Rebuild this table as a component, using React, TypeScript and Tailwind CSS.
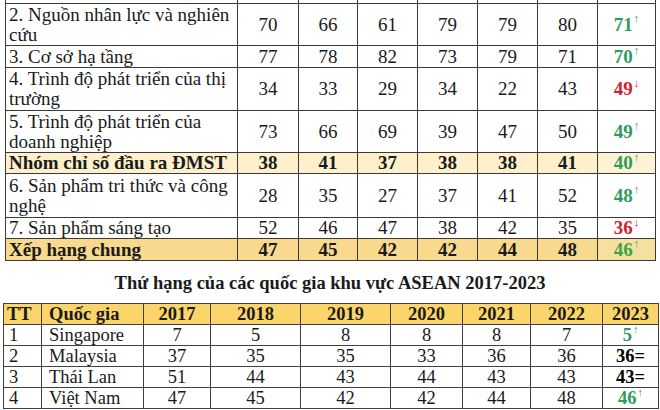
import React from "react";

type Row = {
  label: React.ReactNode;
  vals: number[];
  last: { v: string; dir: "up" | "down" | "eq" };
  h: string;
  kind?: "group" | "total";
};

const topRows: Row[] = [
  {
    label: (
      <>
        2. Nguồn nhân lực và nghiên
        <br />
        cứu
      </>
    ),
    vals: [70, 66, 61, 79, 79, 80],
    last: { v: "71", dir: "up" },
    h: "h-[42px]",
  },
  { label: "3. Cơ sở hạ tầng", vals: [77, 78, 82, 73, 79, 71], last: { v: "70", dir: "up" }, h: "h-[22px]" },
  {
    label: (
      <>
        4. Trình độ phát triển của thị
        <br />
        trường
      </>
    ),
    vals: [34, 33, 29, 34, 22, 43],
    last: { v: "49", dir: "down" },
    h: "h-[43px]",
  },
  {
    label: (
      <>
        5. Trình độ phát triển của
        <br />
        doanh nghiệp
      </>
    ),
    vals: [73, 66, 69, 39, 47, 50],
    last: { v: "49", dir: "up" },
    h: "h-[42px]",
  },
  {
    label: "Nhóm chỉ số đầu ra ĐMST",
    vals: [38, 41, 37, 38, 38, 41],
    last: { v: "40", dir: "up" },
    h: "h-[20px]",
    kind: "group",
  },
  {
    label: (
      <>
        6. Sản phẩm tri thức và công
        <br />
        nghệ
      </>
    ),
    vals: [28, 35, 27, 37, 41, 52],
    last: { v: "48", dir: "up" },
    h: "h-[44px]",
  },
  { label: "7. Sản phẩm sáng tạo", vals: [52, 46, 47, 38, 42, 35], last: { v: "36", dir: "down" }, h: "h-[21px]" },
  {
    label: "Xếp hạng chung",
    vals: [47, 45, 42, 42, 44, 48],
    last: { v: "46", dir: "up" },
    h: "h-[22px]",
    kind: "total",
  },
];

const asean = [
  { tt: 1, name: "Singapore", vals: [7, 5, 8, 8, 8, 7], last: "5", dir: "up" },
  { tt: 2, name: "Malaysia", vals: [37, 35, 35, 33, 36, 36], last: "36", dir: "eq" },
  { tt: 3, name: "Thái Lan", vals: [51, 44, 43, 44, 43, 43], last: "43", dir: "eq" },
  { tt: 4, name: "Việt Nam", vals: [47, 45, 42, 42, 44, 48], last: "46", dir: "up" },
];

const years = [2017, 2018, 2019, 2020, 2021, 2022, 2023];

function Trend({ v, dir, bright }: { v: string; dir: string; bright?: boolean }) {
  if (dir === "eq") return <span className="font-bold text-black">{v}=</span>;
  const color = dir === "down" ? "text-[#d2232c]" : bright ? "text-[#3ba448]" : "text-[#2f9c5c]";
  return (
    <span className={`font-bold ${color}`}>
      {v}
      <sup className="text-[11px] font-normal ml-[1px] top-[-0.75em]">{dir === "up" ? "↑" : "↓"}</sup>
    </span>
  );
}

export default function App() {
  const td = "border-[1.5px] border-[#3a3a3a] p-0 align-middle";
  const td2 = "border border-[#404040] p-0 align-middle h-[21px]";

  return (
    <div className="w-[660px] h-[410px] overflow-hidden bg-white font-[family-name:'Liberation_Serif','Times_New_Roman',serif] text-[#1a1a1a]">
      <div className="px-[5px] -mt-[20px] text-[19px] leading-[20px]">
        <table className="table-fixed border-collapse w-[650px]">
          <colgroup>
            <col className="w-[232px]" />
            <col className="w-[61px]" />
            <col className="w-[59px]" />
            <col className="w-[60px]" />
            <col className="w-[60px]" />
            <col className="w-[60px]" />
            <col className="w-[60px]" />
            <col className="w-[58px]" />
          </colgroup>
          <tbody>
            <tr className="h-[23px]">
              {years.concat([0]).map((y) => (
                <td key={y} className={td}></td>
              ))}
            </tr>
            {topRows.map((r, i) => {
              const bg =
                r.kind === "group" ? "bg-[#fdf0cb]" : r.kind === "total" ? "bg-[#f9d98d]" : "bg-white";
              const bold = r.kind ? "font-bold" : "";
              return (
                <tr key={i} className={`${r.h} ${bg} ${bold}`}>
                  <td className={`${td} pl-[3px] whitespace-nowrap overflow-hidden`}>{r.label}</td>
                  {r.vals.map((v, j) => (
                    <td key={j} className={`${td} text-center`}>
                      {v}
                    </td>
                  ))}
                  <td
                    className={`${td} text-center ${
                      r.kind === "total" ? "bg-[#f7df9f]" : r.kind === "group" ? "bg-[#fdf2d3]" : ""
                    }`}
                  >
                    <Trend v={r.last.v} dir={r.last.dir} bright={r.kind === "total"} />
                  </td>
                </tr>
              );
            })}
          </tbody>
        </table>
      </div>

      <div className="mt-[12px] mb-[10px] text-center font-bold text-[18.5px] leading-[20px]">
        Thứ hạng của các quốc gia khu vực ASEAN 2017-2023
      </div>

      <div className="px-[3px] text-[18.5px] leading-[20px]">
        <table className="table-fixed border-collapse w-[655px]">
          <colgroup>
            <col className="w-[38px]" />
            <col className="w-[102px]" />
            <col className="w-[67px]" />
            <col className="w-[90px]" />
            <col className="w-[90px]" />
            <col className="w-[72px]" />
            <col className="w-[68px]" />
            <col className="w-[72px]" />
            <col className="w-[56px]" />
          </colgroup>
          <thead>
            <tr className="bg-[#fcd56a] font-bold">
              <td className={`${td2} pl-[3px]`}>TT</td>
              <td className={`${td2} pl-[7px]`}>Quốc gia</td>
              {years.map((y) => (
                <td key={y} className={`${td2} text-center`}>
                  {y}
                </td>
              ))}
            </tr>
          </thead>
          <tbody>
            {asean.map((c) => (
              <tr key={c.tt}>
                <td className={`${td2} pl-[5px]`}>{c.tt}</td>
                <td className={`${td2} pl-[7px]`}>{c.name}</td>
                {c.vals.map((v, j) => (
                  <td key={j} className={`${td2} text-center`}>
                    {v}
                  </td>
                ))}
                <td className={`${td2} text-center`}>
                  <Trend v={c.last} dir={c.dir} />
                </td>
              </tr>
            ))}
          </tbody>
        </table>
      </div>
    </div>
  );
}
